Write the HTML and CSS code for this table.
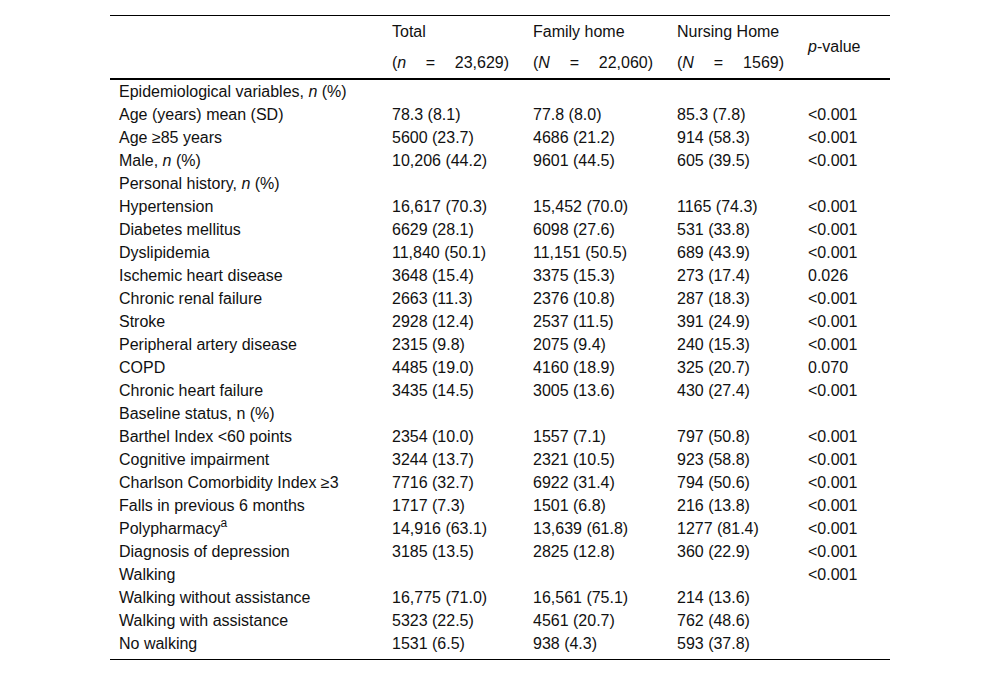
FILE: index.html
```html
<!DOCTYPE html>
<html>
<head>
<meta charset="utf-8">
<link rel="stylesheet" href="styles.css">
</head>
<body>
<div class="wrap">
<table class="data">
<colgroup>
<col class="c1"><col class="c2"><col class="c3"><col class="c4"><col class="c5">
</colgroup>
<thead>
<tr class="h1">
<th></th><th>Total</th><th>Family home</th><th>Nursing Home</th><th rowspan="2" class="pv"><i>p</i>-value</th>
</tr>
<tr class="h2">
<th></th>
<th><span class="just">(<i>n</i> = 23,629)</span></th>
<th><span class="just">(<i>N</i> = 22,060)</span></th>
<th><span class="just">(<i>N</i> = 1569)</span></th>
</tr>
</thead>
<tbody>
<tr><td>Epidemiological variables, <i>n</i> (%)</td><td></td><td></td><td></td><td></td></tr>
<tr><td>Age (years) mean (SD)</td><td>78.3 (8.1)</td><td>77.8 (8.0)</td><td>85.3 (7.8)</td><td>&lt;0.001</td></tr>
<tr><td>Age ≥85 years</td><td>5600 (23.7)</td><td>4686 (21.2)</td><td>914 (58.3)</td><td>&lt;0.001</td></tr>
<tr><td>Male, <i>n</i> (%)</td><td>10,206 (44.2)</td><td>9601 (44.5)</td><td>605 (39.5)</td><td>&lt;0.001</td></tr>
<tr><td>Personal history, <i>n</i> (%)</td><td></td><td></td><td></td><td></td></tr>
<tr><td>Hypertension</td><td>16,617 (70.3)</td><td>15,452 (70.0)</td><td>1165 (74.3)</td><td>&lt;0.001</td></tr>
<tr><td>Diabetes mellitus</td><td>6629 (28.1)</td><td>6098 (27.6)</td><td>531 (33.8)</td><td>&lt;0.001</td></tr>
<tr><td>Dyslipidemia</td><td>11,840 (50.1)</td><td>11,151 (50.5)</td><td>689 (43.9)</td><td>&lt;0.001</td></tr>
<tr><td>Ischemic heart disease</td><td>3648 (15.4)</td><td>3375 (15.3)</td><td>273 (17.4)</td><td>0.026</td></tr>
<tr><td>Chronic renal failure</td><td>2663 (11.3)</td><td>2376 (10.8)</td><td>287 (18.3)</td><td>&lt;0.001</td></tr>
<tr><td>Stroke</td><td>2928 (12.4)</td><td>2537 (11.5)</td><td>391 (24.9)</td><td>&lt;0.001</td></tr>
<tr><td>Peripheral artery disease</td><td>2315 (9.8)</td><td>2075 (9.4)</td><td>240 (15.3)</td><td>&lt;0.001</td></tr>
<tr><td>COPD</td><td>4485 (19.0)</td><td>4160 (18.9)</td><td>325 (20.7)</td><td>0.070</td></tr>
<tr><td>Chronic heart failure</td><td>3435 (14.5)</td><td>3005 (13.6)</td><td>430 (27.4)</td><td>&lt;0.001</td></tr>
<tr><td>Baseline status, n (%)</td><td></td><td></td><td></td><td></td></tr>
<tr><td>Barthel Index &lt;60 points</td><td>2354 (10.0)</td><td>1557 (7.1)</td><td>797 (50.8)</td><td>&lt;0.001</td></tr>
<tr><td>Cognitive impairment</td><td>3244 (13.7)</td><td>2321 (10.5)</td><td>923 (58.8)</td><td>&lt;0.001</td></tr>
<tr><td>Charlson Comorbidity Index ≥3</td><td>7716 (32.7)</td><td>6922 (31.4)</td><td>794 (50.6)</td><td>&lt;0.001</td></tr>
<tr><td>Falls in previous 6 months</td><td>1717 (7.3)</td><td>1501 (6.8)</td><td>216 (13.8)</td><td>&lt;0.001</td></tr>
<tr><td>Polypharmacy<sup>a</sup></td><td>14,916 (63.1)</td><td>13,639 (61.8)</td><td>1277 (81.4)</td><td>&lt;0.001</td></tr>
<tr><td>Diagnosis of depression</td><td>3185 (13.5)</td><td>2825 (12.8)</td><td>360 (22.9)</td><td>&lt;0.001</td></tr>
<tr><td>Walking</td><td></td><td></td><td></td><td>&lt;0.001</td></tr>
<tr><td>Walking without assistance</td><td>16,775 (71.0)</td><td>16,561 (75.1)</td><td>214 (13.6)</td><td></td></tr>
<tr><td>Walking with assistance</td><td>5323 (22.5)</td><td>4561 (20.7)</td><td>762 (48.6)</td><td></td></tr>
<tr class="last"><td>No walking</td><td>1531 (6.5)</td><td>938 (4.3)</td><td>593 (37.8)</td><td></td></tr>
</tbody>
</table>
</div>
</body>
</html>
```
FILE: styles.css
```css
html, body {
  margin: 0;
  padding: 0;
  background: #ffffff;
}
body {
  font-family: "Liberation Sans", Arial, sans-serif;
  font-size: 16px;
  color: #111111;
}
.wrap {
  padding: 15px 0 0 110px;
}
.data {
  border-collapse: collapse;
  table-layout: fixed;
  width: 780px;
  border-top: 1px solid #000;
  border-bottom: 1px solid #000;
}
.c1 { width: 273px; }
.c2 { width: 141px; }
.c3 { width: 144px; }
.c4 { width: 131px; }
.c5 { width: 91px; }
.data th {
  font-weight: normal;
  text-align: left;
  padding: 0 15px 0 9px;
  vertical-align: middle;
  line-height: 18px;
}
.data thead tr.h1 th { height: 31px; }
.data thead tr.h2 th { height: 31px; }
.data thead tr.h2 { border-bottom: 2px solid #000; }
.data thead th.pv { border-bottom: 2px solid #000; }
.just {
  display: block;
  text-align: justify;
  text-align-last: justify;
  white-space: nowrap;
}
.data td {
  height: 23px;
  padding: 0 15px 0 9px;
  vertical-align: middle;
  white-space: nowrap;
  line-height: 18px;
}
.data tr.last td {
  height: 23px;
  padding-bottom: 4px;
}
.data sup {
  font-size: 12px;
  line-height: 0;
  vertical-align: 7px;
}
```
